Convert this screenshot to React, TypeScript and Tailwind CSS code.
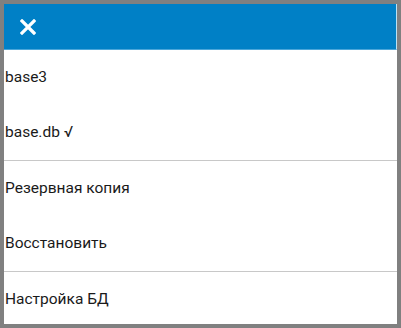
import React from "react";

const Item = ({ children }: { children: React.ReactNode }) => (
  <div className="h-[55px] flex items-center pl-[1px] text-[15.5px] text-[#1a1a1a] shrink-0">
    {children}
  </div>
);

export default function App() {
  return (
    <div
      className="w-[401px] h-[328px] bg-[#808080] pt-[4px] pl-[4px] pr-[4px] pb-[4px] overflow-hidden"
      style={{ fontFamily: "Roboto, 'Noto Sans', sans-serif" }}
    >
      <div className="w-full h-full bg-white overflow-hidden flex flex-col">
        <div className="h-[46px] shrink-0 bg-[#0080c6] border-b border-[#4aa6da] border-r border-r-[#b8e2f6] flex items-center pl-[16px]">
          <svg width="16" height="16" viewBox="0 0 16 16">
            <path d="M2 2 L14 14 M14 2 L2 14" stroke="white" strokeWidth="3.2" strokeLinecap="square" />
          </svg>
        </div>
        <Item>base3</Item>
        <Item>base.db √</Item>
        <div className="h-[1px] bg-[#c8c8c8] shrink-0" />
        <Item>Резервная копия</Item>
        <Item>Восстановить</Item>
        <div className="h-[1px] bg-[#c8c8c8] shrink-0" />
        <Item>Настройка БД</Item>
      </div>
    </div>
  );
}
